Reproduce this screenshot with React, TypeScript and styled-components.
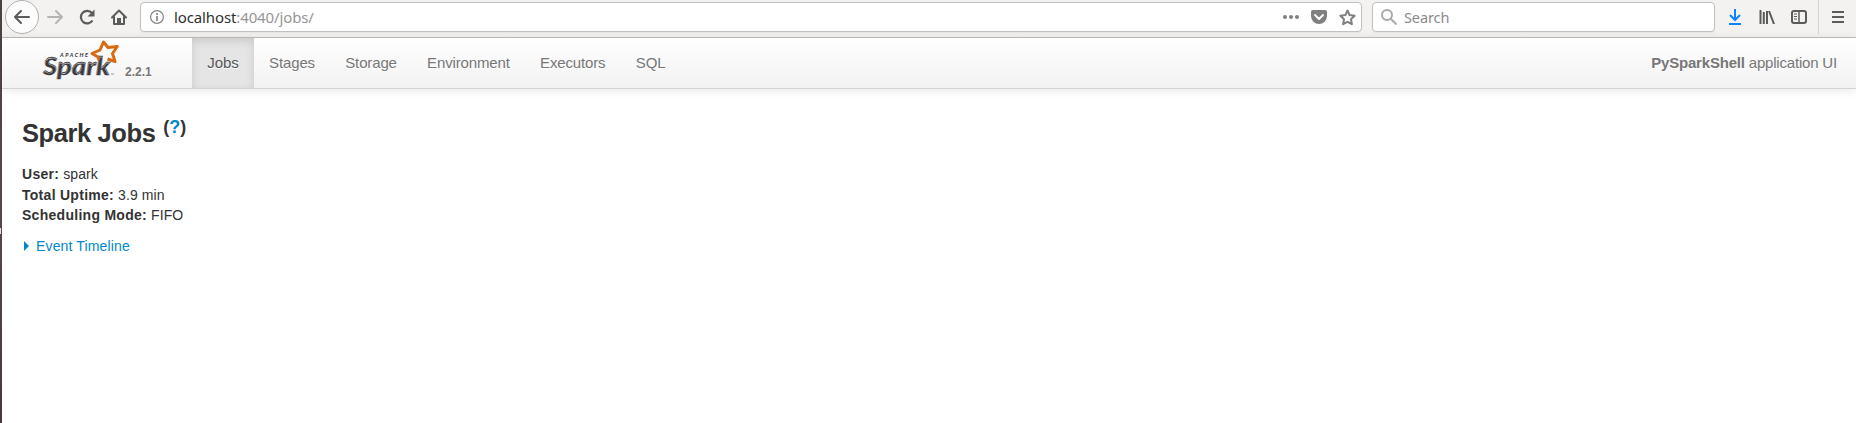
import React from 'react';
import styled, { createGlobalStyle } from 'styled-components';

const Global = createGlobalStyle`
  * { box-sizing: border-box; }
  body { margin: 0; background: #fff; color: #333; font: 14px/20px "Liberation Sans", Arial, sans-serif; overflow: hidden; }
`;
const Screen = styled.div`
  display: flex; width: 1856px; height: 423px;
`;
const DesktopEdge = styled.div`
  width: 2px; flex: none; background: linear-gradient(#4b4340, #55484a 50%, #463b3b); padding-top: 228px;
`;
const EdgeMark = styled.div`
  width: 1px; height: 6px; background: #e8e4e4;
`;
const Browser = styled.div`
  flex: 1; display: flex; flex-direction: column; min-width: 0;
`;
const Toolbar = styled.header`
  height: 38px; flex: none; display: flex; align-items: flex-start; background: #f3f2f1; border-bottom: 1px solid #c0bfbd;
`;
const Tool = styled.span<{ $w: number; $color?: string }>`
  width: ${p => p.$w}px; height: 34px; flex: none; display: flex; align-items: center; justify-content: center;
  color: ${p => p.$color ?? '#5b5b5a'};
  svg { display: block; }
`;
const BackButton = styled.span`
  width: 34px; height: 34px; flex: none; margin-left: 3px; border: 1px solid #b3b2b0; border-radius: 50%; background: #fcfcfc;
  display: flex; align-items: center; justify-content: center; color: #5b5b5a;
`;
const Field = styled.div<{ $w: number; $ml: number }>`
  width: ${p => p.$w}px; margin: 2px 0 0 ${p => p.$ml}px; height: 30px; flex: none; background: #fff; border: 1px solid #c2c1bf;
  border-radius: 4px; display: flex; align-items: center; box-shadow: 0 1px 2px rgba(0,0,0,.05);
`;
const UrlText = styled.span`
  flex: 1; margin-left: 10px; font: 15px/20px "Noto Sans", sans-serif; color: #969696; letter-spacing: -.12px;
  b { font-weight: 400; color: #303030; }
`;
const SearchText = styled.span`
  margin-left: 7px; font: 14.5px/20px "Noto Sans", sans-serif; color: #8b8b8b; letter-spacing: -.1px;
`;
const Divider = styled.span`
  width: 1px; height: 34px; flex: none; background: #d5d4d2;
`;
const NavBar = styled.nav`
  height: 51px; flex: none; display: flex; background: linear-gradient(#fff, #f2f2f2); border-bottom: 1px solid #d4d4d4;
  box-shadow: 0 1px 10px rgba(0,0,0,.1); font-size: 15px; color: #777; text-shadow: 0 1px 0 #fff;
`;
const Brand = styled.div`
  width: 190px; display: flex; padding-left: 40px;
`;
const Version = styled.span`
  font-size: 12px; font-weight: 700; margin: 24px 0 0 6px;
`;
const Tab = styled.a<{ $active?: boolean }>`
  padding: 15px 15.15px; line-height: 20px; letter-spacing: -.14px;
  ${p => p.$active && 'letter-spacing: 0; color: #555; background: #e5e5e5; box-shadow: inset 0 3px 8px rgba(0,0,0,.125);'}
`;
const AppName = styled.span`
  margin: 15px 19px 0 auto; letter-spacing: -.19px;
`;
const Content = styled.main`
  padding: 25px 20px;
`;
const Title = styled.h3`
  margin: 0; font-size: 25.5px; line-height: 39px; font-weight: 700; height: 50px; letter-spacing: -.4px;
  sup { font-size: 18px; line-height: 0; position: relative; top: -9px; vertical-align: baseline; margin-left: 1px; letter-spacing: 0; }
`;
const Link = styled.a`color: #08c;`;
const Summary = styled.ul`
  margin: 0; padding: 0; list-style: none;
  li { height: 20.5px; line-height: 20px; letter-spacing: .1px; }
  b { letter-spacing: .28px; }
`;
const Timeline = styled(Link)`
  display: flex; align-items: center; gap: 7px; margin-top: 10px; padding-left: 2px; letter-spacing: .15px;
`;
const FieldIcon = styled.svg`
  flex: none; margin-left: 8px;
`;

const Arrow = ({ flip }: { flip?: boolean }) => (
  <svg width="18" height="16" viewBox="0 0 18 16" fill="none" stroke="currentColor" strokeWidth="2" strokeLinecap="round" strokeLinejoin="round" transform={flip ? 'scale(-1 1)' : undefined}>
    <path d="M16 8H2M8 2 2 8l6 6" />
  </svg>
);

const SparkLogo = () => (
  <svg width="77" height="42" viewBox="0 0 77 42">
    <text x="18" y="19" textLength="28" fontFamily="Lato, sans-serif" fontSize="5.5" fontWeight="900" fontStyle="italic" fill="#3c3a3e">APACHE</text>
    <text x="1" y="36.5" textLength="67" lengthAdjust="spacingAndGlyphs" fontFamily="Lato, sans-serif" fontSize="25.5" fontWeight="900" fontStyle="italic" fill="#3c3a3e" stroke="#3c3a3e" strokeWidth=".4">Spark</text>
    <path d="M57 22l-1-3-6-3.5 8-3.5 3.5-8 4.5 5.5 9.300-1-4.800 7 2.500 8-7.500-2.500" fill="none" stroke="#d96a0f" strokeWidth="3" strokeLinejoin="round" />
    <path d="M69 36h3" stroke="#999" strokeWidth="1" />
  </svg>
);

export default function App() {
  return (
    <>
      <Global />
      <Screen>
        <DesktopEdge><EdgeMark /></DesktopEdge>
        <Browser>
          <Toolbar>
            <BackButton><Arrow /></BackButton>
            <Tool $w={32} $color="#b5b4b3"><Arrow flip /></Tool>
            <Tool $w={32}>
              <svg width="18" height="18" viewBox="0 0 18 18" fill="none" stroke="currentColor" strokeWidth="2.2"><path d="M14.500 12.500A6.300 6.300 0 1 1 14 5" /><path d="M16.500 1.500v7h-7z" fill="currentColor" stroke="none" /></svg>
            </Tool>
            <Tool $w={32}>
              <svg width="18" height="18" viewBox="0 0 18 18" fill="none" stroke="currentColor" strokeWidth="2" strokeLinejoin="round" strokeLinecap="round"><path d="M2 9.500l7-7 7 7M4 9v7h10V9" /><path d="M7 10h4v6H7z" fill="currentColor" stroke="none" /></svg>
            </Tool>
            <Field $w={1222} $ml={5}>
              <FieldIcon width="15" height="14" viewBox="-1 0 15 14" fill="none" stroke="#858585"><circle cx="7" cy="7" r="6.4" strokeWidth="1.2" /><path d="M7 6v5M7 3v2" strokeWidth="1.7" /></FieldIcon>
              <UrlText><b>localhost</b>:4040/jobs/</UrlText>
              <Tool $w={28} $color="#808080"><svg width="16" height="4" fill="currentColor"><circle cx="2" cy="2" r="2" /><circle cx="8" cy="2" r="2" /><circle cx="14" cy="2" r="2" /></svg></Tool>
              <Tool $w={28} $color="#808080"><svg width="16" height="14" viewBox="0 0 16 14"><path d="M2 0h12q2 0 2 2v4a8 8 0 0 1-16 0V2q0-2 2-2z" fill="currentColor" /><path d="M4 5l4 4 4-4" fill="none" stroke="#fff" strokeWidth="2" strokeLinecap="round" strokeLinejoin="round" /></svg></Tool>
              <Tool $w={28} $color="#808080"><svg width="17" height="17" viewBox="0 0 17 17"><path d="M8.500 1.500l2.100 4.500 5 .7-3.600 3.500.9 5-4.400-2.400-4.400 2.400.9-5L1.400 6.700l5-.7z" fill="none" stroke="currentColor" strokeWidth="2" strokeLinejoin="round" /></svg></Tool>
            </Field>
            <Field $w={343} $ml={10}>
              <FieldIcon width="16" height="16" viewBox="0 0 16 16" fill="none" stroke="#a9a9a9" strokeWidth="2"><circle cx="6" cy="6" r="5" /><path d="M9.500 9.500l6 6" /></FieldIcon>
              <SearchText>Search</SearchText>
            </Field>
            <Tool $w={9} />
            <Tool $w={22} $color="#0a84ff"><svg width="14" height="16" viewBox="0 0 14 16" fill="none" stroke="currentColor" strokeWidth="2"><path d="M7 0v11M2 6l5 5 5-5M1 15h12" /></svg></Tool>
            <Tool $w={42}><svg width="16" height="14" viewBox="0 0 16 14" fill="none" stroke="currentColor" strokeWidth="2"><path d="M1.500 0v14M4.800 2v12M8 1v13M10 1l5 13" /></svg></Tool>
            <Tool $w={22}><svg width="16" height="14" viewBox="0 0 16 14" fill="none" stroke="currentColor" strokeWidth="2"><rect x="1" y="1" width="14" height="12" rx="2" /><path d="M8 1v12" strokeWidth="1.500" /><path d="M3 4h3M3 6.500h3M3 9h3" strokeWidth="1" /></svg></Tool>
            <Tool $w={8} />
            <Divider />
            <Tool $w={37}><svg width="12" height="12" stroke="currentColor" strokeWidth="2"><path d="M0 1h12M0 6h12M0 11h12" /></svg></Tool>
          </Toolbar>
          <NavBar>
            <Brand><SparkLogo /><Version>2.2.1</Version></Brand>
            <Tab $active>Jobs</Tab>
            <Tab>Stages</Tab>
            <Tab>Storage</Tab>
            <Tab>Environment</Tab>
            <Tab>Executors</Tab>
            <Tab>SQL</Tab>
            <AppName><b>PySparkShell</b> application UI</AppName>
          </NavBar>
          <Content>
            <Title>Spark Jobs <sup>(<Link>?</Link>)</sup></Title>
            <Summary>
              <li><b>User:</b> spark</li>
              <li><b>Total Uptime:</b> 3.9 min</li>
              <li><b>Scheduling Mode:</b> FIFO</li>
            </Summary>
            <Timeline><svg width="5" height="10"><path d="M0 0l5 5-5 5z" fill="currentColor" /></svg>Event Timeline</Timeline>
          </Content>
        </Browser>
      </Screen>
    </>
  );
}
